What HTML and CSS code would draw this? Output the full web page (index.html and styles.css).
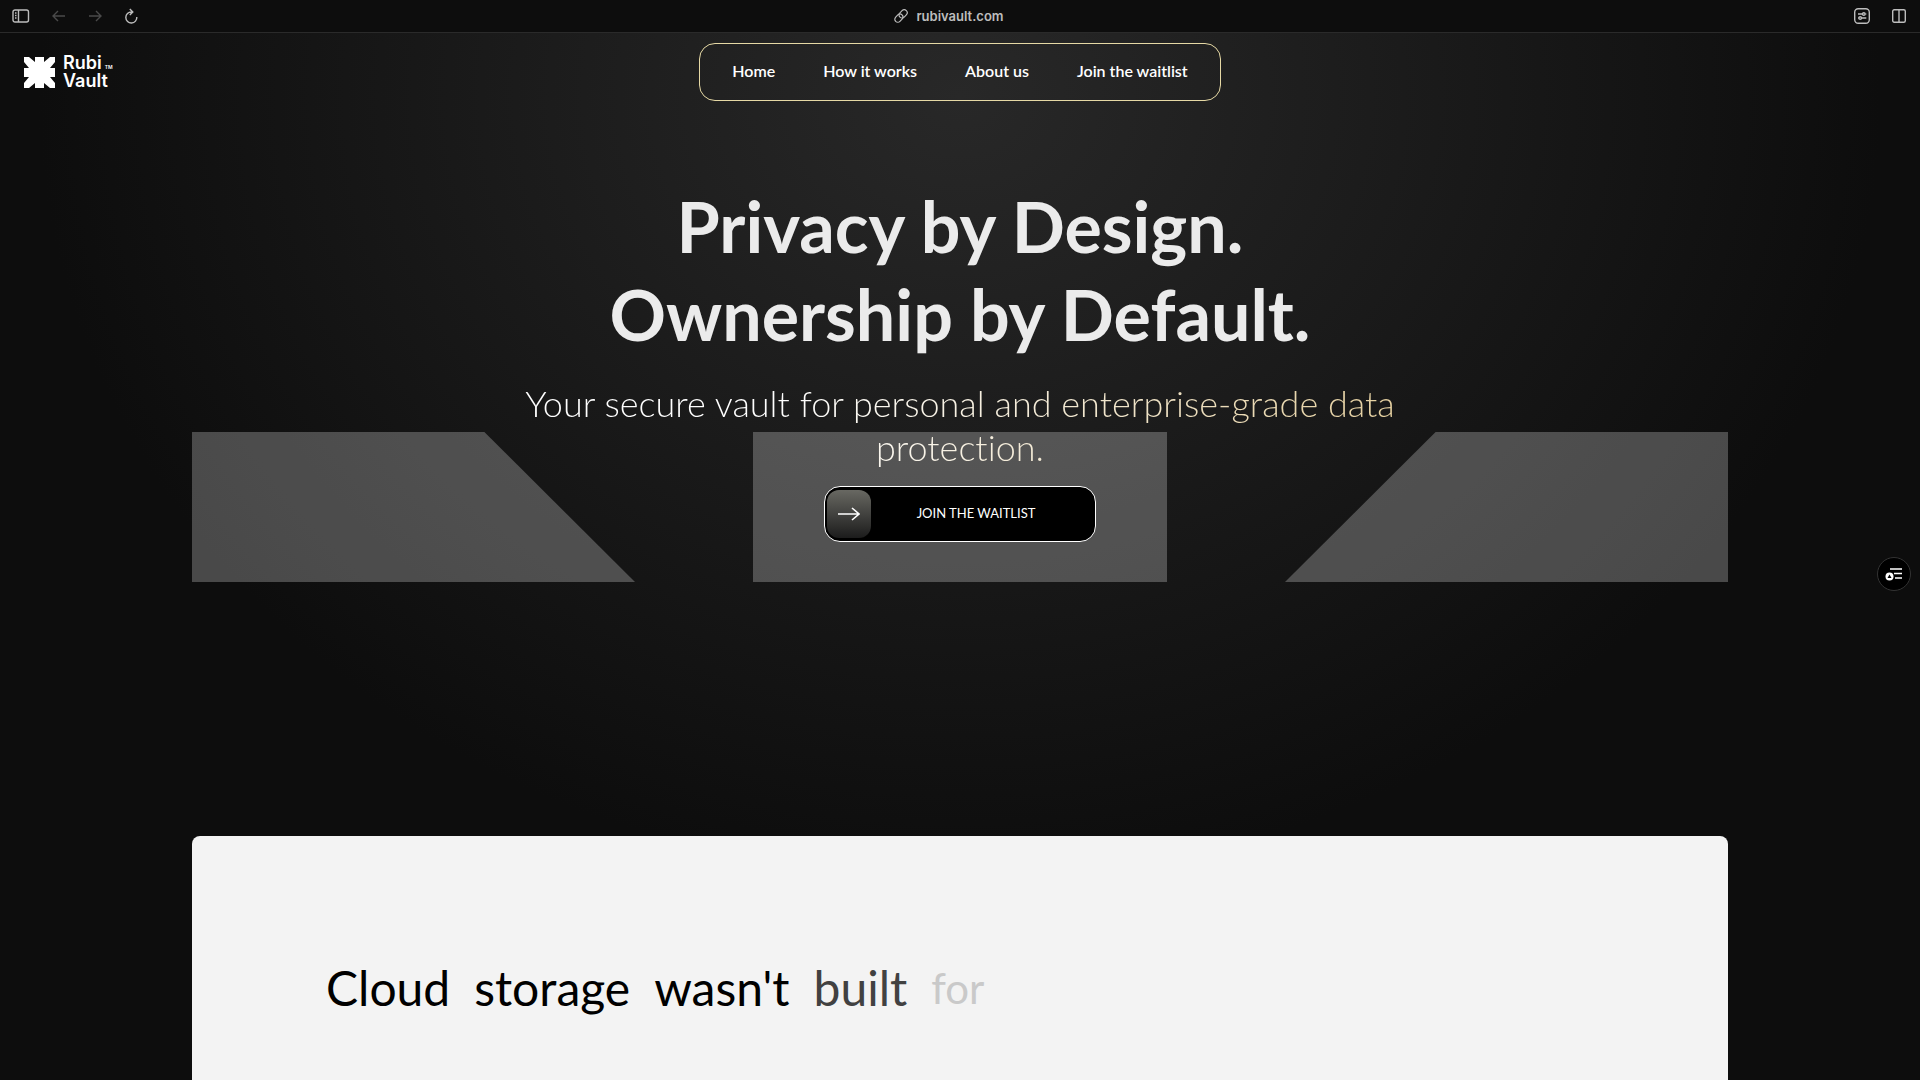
FILE: index.html
```html
<!DOCTYPE html>
<html lang="en">
	<head>
		<meta charset="UTF-8">
		<title>Rubi Vault</title>
		<link rel="stylesheet" href="styles.css">
	</head>
	<body>
		<div class="toolbar">
			<div class="tools">
				<button type="button" aria-label="Sidebar"><svg width="18" height="14" viewBox="0 0 18 14"><rect x="1" y="1" width="15.500" height="12" rx="2"/><path d="M6.500 1v12M3 4h1.500M3 6.500h1.500M3 9h1.500"/></svg></button>
				<button type="button" class="off" aria-label="Back"><svg width="14" height="12" viewBox="0 0 14 12"><path d="M13 6H1M6 1L1 6l5 5"/></svg></button>
				<button type="button" class="off" aria-label="Forward"><svg width="14" height="12" viewBox="0 0 14 12"><path d="M1 6h12M8 1l5 5-5 5"/></svg></button>
				<button type="button" aria-label="Reload"><svg width="14" height="16" viewBox="0 0 14 16"><path d="M8.500 4H7.500A5.500 5.500 0 1 0 12.800 9M5.800 1l3 3-3 3"/></svg></button>
			</div>
			<a href="#" class="address">
				<svg width="14" height="14" viewBox="0 0 14 14"><g transform="rotate(-45 7 7)"><rect x="-.5" y="4" width="9" height="6" rx="3"/><rect x="5.500" y="4" width="9" height="6" rx="3"/></g></svg>
				rubivault.com
			</a>
			<div class="tools right">
				<button type="button" aria-label="Page settings"><svg width="16" height="16" viewBox="0 0 16 16"><rect x=".7" y=".7" width="14.600" height="14.600" rx="3.500"/><path d="M4 6h4.500M11.500 6h.8M4 10h.8M7.500 10h4.800"/><circle cx="9.800" cy="6" r="1.300"/><circle cx="6.200" cy="10" r="1.300"/></svg></button>
				<button type="button" aria-label="Split view"><svg width="14" height="14" viewBox="0 0 14 14"><rect x=".7" y=".7" width="12.600" height="12.600" rx="1.500"/><path d="M7 1v12"/></svg></button>
			</div>
		</div>
		<div class="page">
			<header class="header">
				<a href="#" class="logo">
					<svg width="31" height="31" viewBox="0 0 31 31"><path d="M0 0h5l6 5V0h9v5l6-5h5v5l-5 6h5v9h-5l5 6v5h-5l-6-5v5h-9v-5l-6 5H0v-5l5-6H0v-9h5L0 5z"/></svg>
					<span class="name"><span class="line">Rubi<small>TM</small></span><span class="line">Vault</span></span>
				</a>
				<nav class="nav">
					<a href="#">Home</a>
					<a href="#">How it works</a>
					<a href="#">About us</a>
					<a href="#">Join the waitlist</a>
				</nav>
			</header>
			<main>
				<section class="hero">
					<div class="shapes">
						<div class="shapeA"></div>
						<div class="shapeB"></div>
						<div class="shapeC"></div>
					</div>
					<div class="intro">
						<h1>Privacy by Design.<br>Ownership by Default.</h1>
						<p>Your secure vault for personal and enterprise-grade data protection.</p>
						<button type="button" class="joinBtn">
							<span class="arrow"><svg width="22" height="14" viewBox="0 0 22 14"><path d="M0 7h20M14 1l7 6-7 6"/></svg></span>
							<span class="label">JOIN THE WAITLIST</span>
						</button>
					</div>
				</section>
				<section class="card">
					<h2><span>Cloud</span> <span>storage</span> <span>wasn't</span> <span class="built">built</span> <span class="for">for</span></h2>
				</section>
			</main>
			<button type="button" class="sideBtn" aria-label="Open list"><svg width="18" height="14" viewBox="0 0 18 14"><path d="M5 2h12M9 6.500h8M10 11h7"/><circle cx="4.500" cy="9.500" r="4"/><path class="mark" d="M4.500 7.500l2 3.500h-4z"/></svg></button>
		</div>
	</body>
</html>
```
FILE: styles.css
```css
*{
	padding: 0;
	margin: 0;
	box-sizing: border-box;
}
body{
	display: flex;
	flex-direction: column;
	min-height: 100vh;
	background: #0d0d0d;
	color: #fff;
	font-family: Lato, sans-serif;
	font-variant-ligatures: none;
}
a{
	color: inherit;
	text-decoration: none;
}
button{
	border: none;
	background: none;
	color: inherit;
	font-family: inherit;
	cursor: pointer;
}
svg{
	display: block;
	fill: none;
	stroke: currentColor;
}
.toolbar{
	display: grid;
	grid-template-columns: 1fr auto 1fr;
	align-items: center;
	flex: none;
	height: 33px;
	padding: 0 14px 0 12px;
	border-bottom: 1px solid #2a2a2a;
	background: #0d0d0d;
	color: #bdbdbd;
}
.toolbar svg{
	stroke-width: 1.4;
}
.tools{
	display: flex;
	align-items: center;
	gap: 22px;
}
.tools.right{
	justify-content: flex-end;
}
.tools .off{
	color: #4a4a4a;
}
.address{
	display: flex;
	align-items: center;
	gap: 8px;
	padding-right: 20px;
	font: 600 13px/16px Inter, sans-serif;
}
.address svg{
	stroke-width: 1.2;
}
.page{
	flex: 1;
	display: flex;
	flex-direction: column;
	background: radial-gradient(ellipse 48% 75% at 50% 6%, #282828, #0d0d0d);
}
.header{
	display: grid;
	grid-template-columns: 1fr auto 1fr;
	align-items: center;
	padding: 10px 24px 0;
}
.logo{
	display: flex;
	align-items: center;
	gap: 8px;
}
.logo svg{
	fill: #fff;
	stroke: none;
}
.name{
	font: 600 18px/18px Inter, sans-serif;
}
.name .line{
	display: flex;
	align-items: baseline;
	gap: 3px;
}
.name small{
	font-size: 5px;
	line-height: 6px;
}
.nav{
	display: flex;
	align-items: center;
	gap: 48px;
	height: 58px;
	padding: 0 32px 4px;
	border: 1px solid #e6d9a5;
	border-radius: 16px;
	font-size: 16px;
	font-weight: 600;
}
main{
	flex: 1;
	display: flex;
	flex-direction: column;
}
.hero{
	display: grid;
	grid-template-columns: 10% 1fr 10%;
	height: 735px;
}
.shapes{
	grid-area: 1 / 2;
	display: flex;
	justify-content: space-between;
	height: 150px;
	margin-top: 331px;
}
.shapes div{
	width: 443px;
	background: rgba(255,255,255,.25);
}
.shapes .shapeA{
	clip-path: polygon(0 0, 66% 0, 100% 100%, 0 100%);
}
.shapes .shapeB{
	width: 414px;
}
.shapes .shapeC{
	clip-path: polygon(34% 0, 100% 0, 100% 100%, 0 100%);
}
.intro{
	grid-area: 1 / 2;
	display: flex;
	flex-direction: column;
	align-items: center;
	padding-top: 81px;
	text-align: center;
	z-index: 1;
}
.intro h1{
	color: #ebebeb;
	font-size: 70px;
	line-height: 88px;
}
.intro p{
	max-width: 900px;
	margin-top: 23px;
	background: linear-gradient(100deg, #fff 30%, #e3cd9b);
	background-clip: text;
	-webkit-background-clip: text;
	color: transparent;
	font-size: 36px;
	font-weight: 300;
	line-height: 44px;
}
.joinBtn{
	display: flex;
	align-items: center;
	width: 272px;
	height: 56px;
	margin-top: 17px;
	padding: 2px;
	border: 1px solid #fff;
	border-radius: 16px;
	background: #000;
	font-size: 13px;
}
.arrow{
	display: flex;
	align-items: center;
	justify-content: center;
	width: 44px;
	height: 48px;
	border-radius: 12px;
	background: linear-gradient(#686862, #1c1c1c);
}
.arrow svg{
	stroke-width: 1.6;
}
.label{
	flex: 1;
	padding: 0 12px 2px 0;
}
.card{
	flex: 1;
	margin: 0 10%;
	padding: 120px 134px 40px;
	border-radius: 8px 8px 0 0;
	background: #f3f3f3;
	color: #000;
}
.card h2{
	display: flex;
	align-items: center;
	gap: 24px;
	font-size: 48px;
	font-weight: 400;
	line-height: 64px;
}
.card .built{
	color: #414141;
}
.card .for{
	color: #c9c9c9;
	font-size: 42px;
}
.sideBtn{
	position: fixed;
	top: 557px;
	right: 9px;
	display: flex;
	align-items: center;
	justify-content: center;
	width: 34px;
	height: 34px;
	border: 1px solid #333;
	border-radius: 50%;
	background: #000;
}
.sideBtn svg{
	stroke-width: 1.6;
}
.sideBtn circle{
	fill: #fff;
	stroke: none;
}
.sideBtn .mark{
	fill: #000;
	stroke: none;
}
```
